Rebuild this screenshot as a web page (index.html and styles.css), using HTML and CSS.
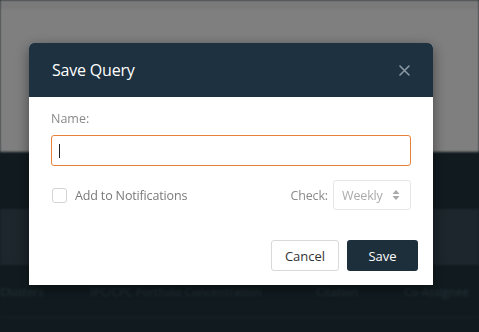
FILE: index.html
```html
<!DOCTYPE html>
<html lang="en">
<head>
    <meta charset="UTF-8">
    <meta name="viewport" content="width=device-width, initial-scale=1.0">
    <title>Save Query</title>
    <link rel="stylesheet" href="styles.css">
</head>
<body>
    <div class="page">
        <div class="page-top">
            <div class="page-topbar"></div>
        </div>
        <div class="band band-dark"></div>
        <div class="band band-light"></div>
        <div class="tabs">
            <span class="tab tab-clusters">Clusters</span>
            <span class="tab tab-ipc">IPC/CPC Portfolio Concentration</span>
            <span class="tab tab-citation">Citation</span>
            <span class="tab tab-co">Co-Assignee</span>
        </div>
        <div class="band band-bottom"></div>
    </div>

    <div class="overlay">
        <div class="modal">
            <div class="modal-header">
                <h3 class="modal-title">Save Query</h3>
                <button class="modal-close" aria-label="Close">
                    <svg width="11" height="11" viewBox="0 0 11 11">
                        <path d="M1 1L10 10M10 1L1 10" stroke="#8b98a2" stroke-width="1.6" stroke-linecap="round"/>
                    </svg>
                </button>
            </div>
            <div class="modal-body">
                <label class="field-label" for="queryName">Name:</label>
                <div class="name-input">
                    <span class="caret"></span>
                </div>
                <div class="options-row">
                    <label class="check">
                        <span class="check-box"></span>
                        <span>Add to Notifications</span>
                    </label>
                    <div class="check-freq">
                        <span>Check:</span>
                        <div class="select">
                            <span>Weekly</span>
                            <svg width="8" height="12" viewBox="0 0 8 12">
                                <path d="M4 1L7.5 5H0.5Z M4 11L7.5 7H0.5Z" fill="#a9a9a9"/>
                            </svg>
                        </div>
                    </div>
                </div>
            </div>
            <div class="modal-footer">
                <button class="btn btn-cancel">Cancel</button>
                <button class="btn btn-save">Save</button>
            </div>
        </div>
    </div>
</body>
</html>
```

FILE: styles.css
```css
body {
    margin: 0;
    width: 479px;
    height: 332px;
    overflow: hidden;
    font-family: "Open Sans", "Noto Sans", sans-serif;
    background-color: #22363f;
}
.page {
    filter: blur(1px);
}
.page-top {
    height: 152px;
    background-color: #ffffff;
    border-bottom: 1px solid #e8e8e8;
    box-sizing: border-box;
}
.page-topbar {
    height: 9px;
    background-color: #f4f4f4;
}
.band {
    height: 57px;
}
.band-dark {
    background-color: #22363f;
}
.band-light {
    height: 56px;
    background-color: #384c58;
}
.tabs {
    height: 53px;
    background-color: #22363f;
    border-bottom: 1px solid #2d434e;
    box-sizing: border-box;
    display: flex;
    align-items: center;
    font-size: 11.5px;
    font-weight: 600;
    letter-spacing: -0.2px;
    color: #3e5867;
    white-space: nowrap;
}
.tab {
    flex: none;
}
.tab-clusters {
    width: 90px;
}
.tab-ipc {
    width: 226px;
}
.tab-citation {
    width: 88px;
}
.band-bottom {
    height: 20px;
    background-color: #22363f;
}
.overlay {
    position: fixed;
    top: 0;
    left: 0;
    right: 0;
    bottom: 0;
    background-color: rgba(0, 0, 0, 0.5);
}
.modal {
    width: 404px;
    margin: 43px 0 0 29px;
    background: white;
    border-radius: 5px 5px 0 0;
    box-shadow: 0 4px 14px rgba(0, 0, 0, 0.45);
}
.modal-header {
    height: 54px;
    background-color: #1e3140;
    border-radius: 5px 5px 0 0;
    display: flex;
    align-items: center;
    justify-content: space-between;
    padding: 0 23px 0 23px;
}
.modal-title {
    margin: 0;
    font-size: 16px;
    font-weight: 400;
    color: #ffffff;
    letter-spacing: -0.2px;
}
.modal-close {
    background: none;
    border: none;
    padding: 0;
    display: flex;
}
.modal-body {
    padding: 13px 22px 0 22px;
}
.field-label {
    display: block;
    font-size: 12.5px;
    line-height: 18px;
    color: #8a8a8a;
    margin-bottom: 7px;
}
.name-input {
    height: 31px;
    border: 1px solid #e8823a;
    border-radius: 3px;
    box-sizing: border-box;
    display: flex;
    align-items: center;
    padding-left: 7px;
}
.caret {
    width: 1px;
    height: 14px;
    background-color: #222;
}
.options-row {
    display: flex;
    align-items: center;
    justify-content: space-between;
    margin-top: 14px;
}
.check {
    display: flex;
    align-items: center;
    gap: 8px;
    font-size: 12.5px;
    letter-spacing: -0.15px;
    color: #7a7a7a;
    margin-left: 1px;
}
.check-box {
    width: 13px;
    height: 13px;
    border: 1px solid #d4d4d4;
    border-radius: 3px;
}
.check-freq {
    display: flex;
    align-items: center;
    gap: 5px;
    font-size: 12.5px;
    letter-spacing: -0.15px;
    color: #8a8a8a;
}
.select {
    width: 78px;
    height: 30px;
    box-sizing: border-box;
    border: 1px solid #e6e6e6;
    border-radius: 3px;
    display: flex;
    align-items: center;
    justify-content: space-between;
    padding: 0 10px 0 8px;
    color: #ababab;
}
.modal-footer {
    display: flex;
    justify-content: flex-end;
    gap: 8px;
    padding: 30px 15px 14px 0;
}
.btn {
    height: 31px;
    border-radius: 3px;
    font-family: "Open Sans", "Noto Sans", sans-serif;
    font-size: 13px;
    padding: 0;
    cursor: pointer;
}
.btn-cancel {
    width: 68px;
    background: white;
    border: 1px solid #d9d9d9;
    color: #333;
}
.btn-save {
    width: 71px;
    background-color: #1e2f3c;
    border: none;
    color: white;
}
```
